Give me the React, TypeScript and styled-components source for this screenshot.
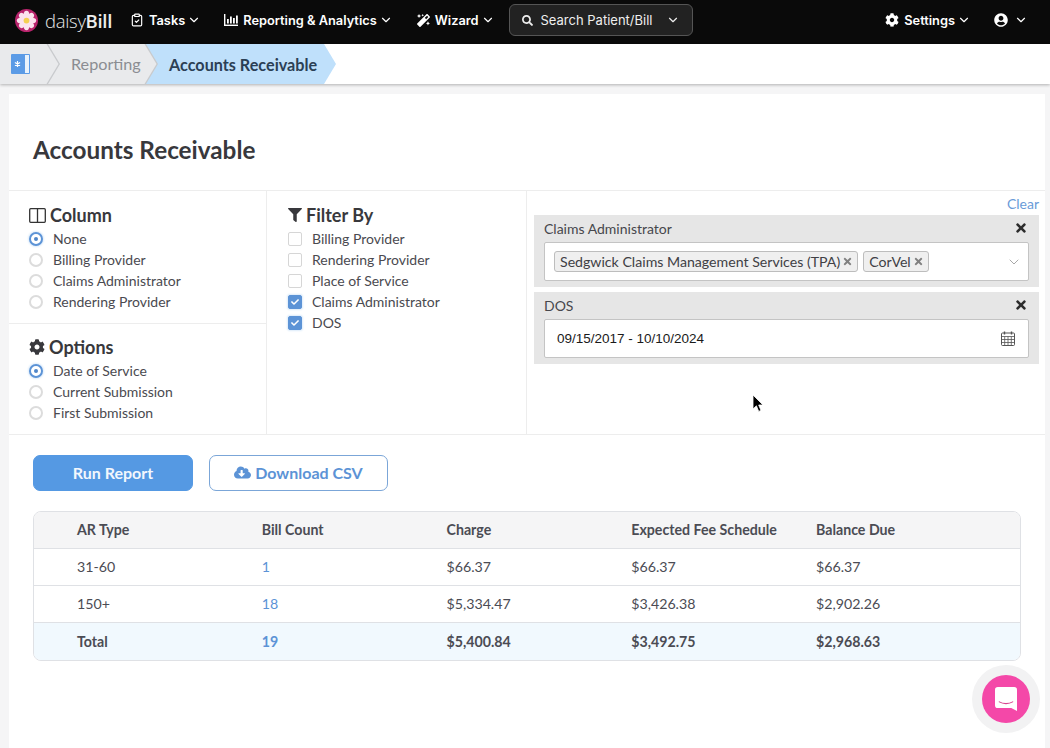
import styled, { createGlobalStyle } from 'styled-components';
import {
  FaCog,
  FaFilter,
  FaUserCircle,
  FaSearch,
  FaMagic,
  FaCloudDownloadAlt,
  FaTimes,
  FaCheck,
} from 'react-icons/fa';
import { ChevronDown, ClipboardCheck } from 'lucide-react';

const GlobalStyle = createGlobalStyle`
  html, body {
    margin: 0;
    padding: 0;
    height: 100%;
    background: #f5f5f6;
  }
  * {
    box-sizing: border-box;
  }
`;

const Page = styled.div`
  position: relative;
  height: 748px;
  display: flex;
  flex-direction: column;
  overflow: hidden;
  font-family: Lato, 'Open Sans', sans-serif;
  color: #3d3d42;
`;

const TopBar = styled.header`
  height: 44px;
  flex: none;
  background: #0a0a0a;
  display: flex;
  align-items: center;
  padding: 0 22px 4px 15px;
  color: #fff;
  font-family: Inter, sans-serif;
`;

const Brand = styled.div`
  display: flex;
  align-items: center;
  gap: 7px;
  margin-right: 17px;
`;

const BrandName = styled.span`
  width: 68px;
  font-family: 'Open Sans', sans-serif;
  font-size: 18.5px;
  font-weight: 300;
  letter-spacing: -0.3px;
  color: #e8e8e8;

  b {
    font-weight: 600;
    color: #eee;
  }
`;

const NavItem = styled.div<{ $gap?: number }>`
  display: flex;
  align-items: center;
  gap: 5px;
  margin-right: ${(p) => p.$gap ?? 0}px;
  font-size: 12.8px;
  font-weight: 600;
  white-space: nowrap;
`;

const NavCaret = styled(ChevronDown).attrs({ size: 14 })`
  margin-left: -3px;
`;

const UserCaret = styled(ChevronDown).attrs({ size: 14 })`
  margin-left: 1px;
`;

const Search = styled.div`
  width: 184px;
  height: 32px;
  margin-right: auto;
  padding: 0 12px;
  display: flex;
  align-items: center;
  gap: 8px;
  background: #222;
  border: 1px solid #555;
  border-radius: 6px;
  font-size: 13px;
  color: #eee;

  span {
    flex: 1;
  }
`;

const CrumbBar = styled.nav`
  height: 40px;
  flex: none;
  background: #fff;
  display: flex;
  box-shadow: 0 1px 3px rgba(0, 0, 0, 0.28);
  position: relative;
  font-size: 16.2px;
`;

const arrow = 'polygon(0 0, calc(100% - 12px) 0, 100% 50%, calc(100% - 12px) 100%, 0 100%)';

const CrumbHome = styled.div`
  position: relative;
  z-index: 2;
  width: 60px;
  background: #c8cacd;
  clip-path: ${arrow};
  display: flex;
  align-items: center;
  padding-left: 11px;

  &::before {
    content: '';
    position: absolute;
    inset: 0 1.5px 0 -1.5px;
    background: #e9eaec;
    clip-path: ${arrow};
  }
  svg {
    position: relative;
  }
`;

const CrumbLink = styled.div`
  position: relative;
  z-index: 1;
  width: 110px;
  margin-left: -12px;
  padding: 0 0 1px 23px;
  background: #c8cacd;
  clip-path: ${arrow};
  display: flex;
  align-items: center;
  color: #8b8d92;

  &::before {
    content: '';
    position: absolute;
    inset: 0 1.5px 0 -1.5px;
    background: #e9eaec;
    clip-path: ${arrow};
  }
  span {
    position: relative;
  }
`;

const CrumbActive = styled.div`
  width: 190px;
  margin-left: -12px;
  padding-left: 23px;
  background: #bfe0fb;
  clip-path: ${arrow};
  display: flex;
  align-items: center;
  font-weight: 700;
  color: #2b3f55;
`;

const Panel = styled.main`
  flex: 1;
  margin: 10px 5px 0 9px;
  background: #fff;
`;

const TitleRow = styled.div`
  height: 96px;
  display: flex;
  align-items: center;
  padding: 15px 0 0 24px;
`;

const Title = styled.h1`
  margin: 0;
  font-size: 24.3px;
  font-weight: 700;
  color: #38383c;
`;

const FilterGrid = styled.section`
  height: 245px;
  display: grid;
  grid-template-columns: 258px 260px 1fr;
  border-top: 1px solid #ededed;
  border-bottom: 1px solid #ededed;
`;

const Column = styled.div`
  border-right: 1px solid #ededed;
  display: flex;
  flex-direction: column;

  &:last-child {
    border-right: 0;
  }
`;

const Group = styled.div`
  padding: 13px 20px 11px;
`;

const ColumnGroup = styled(Group)`
  border-bottom: 1px solid #ededed;
`;

const OptionsGroup = styled(Group)`
  padding-top: 12px;
`;

const FilterGroup = styled(Group)`
  padding-left: 21px;
`;

const GroupHeading = styled.h2`
  margin: 0 0 2px;
  height: 22px;
  display: flex;
  align-items: center;
  gap: 4px;
  font-size: 18px;
  font-weight: 700;
  color: #38383c;
`;

const OptionRow = styled.div`
  height: 21px;
  display: flex;
  align-items: center;
  gap: 10px;
  font-size: 14px;
  color: #4a4a50;
`;

const Radio = styled.span<{ $on?: boolean }>`
  width: 14px;
  height: 14px;
  flex: none;
  border-radius: 50%;
  border: ${(p) => (p.$on ? '2px solid #5c93d6' : '2px solid #dcdcdc')};
  display: flex;
  align-items: center;
  justify-content: center;
  background: #fff;
  box-shadow: ${(p) => (p.$on ? '0 0 2px 1px #dcebfa' : 'none')};

  &::after {
    content: '';
    width: 4px;
    height: 4px;
    border-radius: 50%;
    background: ${(p) => (p.$on ? '#4f86c9' : 'transparent')};
  }
`;

const Check = styled.span<{ $on?: boolean }>`
  width: 14px;
  height: 14px;
  flex: none;
  border-radius: 2px;
  border: 1.5px solid ${(p) => (p.$on ? '#5c93d6' : '#d6d6d6')};
  background: ${(p) => (p.$on ? '#5c93d6' : '#fff')};
  display: flex;
  align-items: center;
  justify-content: center;
  color: #fff;
  font-size: 8px;
  box-shadow: ${(p) => (p.$on ? '0 0 2px 1px #dcebfa' : 'none')};
`;

const ClearRow = styled.div`
  height: 24px;
  padding: 4px 6px 0 0;
  text-align: right;
  font-size: 14px;
  color: #6a9bd8;
`;

const FilterStack = styled.div`
  display: flex;
  flex-direction: column;
  gap: 5px;
  padding: 0 6px 0 7px;
`;

const FilterCard = styled.div`
  height: 72px;
  padding: 0 10px;
  background: #e6e6e6;
`;

const FilterHead = styled.div`
  height: 27px;
  padding-bottom: 1px;
  display: flex;
  align-items: center;
  justify-content: space-between;
  font-size: 14px;
  color: #47474c;

  svg {
    color: #2c2c2c;
    font-size: 14px;
    margin-right: 1.5px;
  }
`;

const FieldBox = styled.div`
  height: 39px;
  display: flex;
  align-items: center;
  gap: 5px;
  padding: 0 13px 0 9px;
  background: #fff;
  border: 1px solid #c4c4c4;
  border-radius: 2px;
`;

const Tag = styled.span`
  height: 21px;
  display: flex;
  align-items: center;
  gap: 2px;
  padding: 0 4px 0 5px;
  background: #efefef;
  border: 1px solid #bdbdbd;
  border-radius: 3px;
  font-size: 14.15px;
  color: #404045;
  white-space: nowrap;

  svg {
    color: #808080;
    font-size: 11px;
  }
`;

const SelectCaret = styled(ChevronDown).attrs({ size: 16, color: '#a8a8a8', strokeWidth: 1.5 })`
  margin: 0 -7px 0 auto;
`;

const DateValue = styled.span`
  flex: 1;
  padding-left: 3px;
  font-family: 'Liberation Sans', Arial, sans-serif;
  font-size: 13.5px;
  color: #1a1a1a;
`;

const Actions = styled.div`
  display: flex;
  gap: 16px;
  padding: 20px 0 20px 24px;
`;

const Button = styled.button<{ $ghost?: boolean }>`
  height: 36px;
  width: ${(p) => (p.$ghost ? '179px' : '160px')};
  padding: 0 0 2px;
  display: flex;
  align-items: center;
  justify-content: center;
  gap: 4px;
  border-radius: 7px;
  border: 1px solid ${(p) => (p.$ghost ? '#7ba6d8' : '#5599e3')};
  background: ${(p) => (p.$ghost ? '#fff' : '#5599e3')};
  color: ${(p) => (p.$ghost ? '#5c93d6' : '#f2f7fd')};
  font-family: inherit;
  font-size: 16px;
  font-weight: 700;
`;

const Table = styled.div`
  width: 988px;
  margin-left: 24px;
  border: 1px solid #dfe1e5;
  border-radius: 8px;
  overflow: hidden;
`;

const Row = styled.div<{ $kind?: 'head' | 'total' }>`
  height: 37px;
  display: grid;
  grid-template-columns: repeat(5, 184.75px);
  align-items: center;
  padding: 0 0 1px 43px;
  font-size: 14.2px;
  color: #4b4c54;
  font-weight: ${(p) => (p.$kind ? 700 : 400)};
  background: ${(p) =>
    p.$kind === 'head' ? '#f5f5f6' : p.$kind === 'total' ? '#f1f9fe' : '#fff'};
  border-bottom: 1px solid #dfe1e5;

  &:last-child {
    border-bottom: 0;
  }
`;

const CountLink = styled.span`
  color: #5c93d6;
`;

const ChatHalo = styled.div`
  position: absolute;
  right: 10px;
  bottom: 15px;
  width: 68px;
  height: 68px;
  border-radius: 50%;
  background: #f2f2f3;
  display: flex;
  align-items: center;
  justify-content: center;
`;

const ChatButton = styled.div`
  width: 48px;
  height: 48px;
  border-radius: 50%;
  background: #f448a8;
  display: flex;
  align-items: center;
  justify-content: center;
`;

const Pointer = styled.svg`
  position: absolute;
  left: 752px;
  top: 394px;
`;

const Logo = () => (
  <svg width="23" height="23" viewBox="0 0 24 24">
    <circle cx="12" cy="12" r="12" fill="#b8246c" />
    {[0, 45, 90, 135, 180, 225, 270, 315].map((a) => (
      <ellipse key={a} cx="12" cy="6.5" rx="3" ry="4.6" fill="#fbe3ee" transform={`rotate(${a} 12 12)`} />
    ))}
    <circle cx="12" cy="12" r="3" fill="#f4cf52" />
  </svg>
);

const BarsIcon = () => (
  <svg width="14" height="12" viewBox="0 0 14 12" fill="#fff">
    <rect x="0" y="0" width="1.4" height="12" />
    <rect x="0" y="10.6" width="14" height="1.4" />
    <rect x="3" y="5" width="1.8" height="4.5" />
    <rect x="6" y="2.5" width="1.8" height="7" />
    <rect x="9" y="4" width="1.8" height="5.5" />
    <rect x="12" y="1.5" width="1.8" height="8" />
  </svg>
);

const ChartCrumbIcon = () => (
  <svg width="20" height="20" viewBox="0 0 20 20">
    <rect x="0" y="0" width="19" height="20" rx="1" fill="#5b9be6" />
    <rect x="14" y="1" width="4" height="18" fill="#e8f2fc" />
    <path d="M6.5 7v6M3.9 8.5l5.2 3M9.1 8.5l-5.2 3" stroke="#fff" strokeWidth="1.2" />
  </svg>
);

const ColumnsIcon = () => (
  <svg width="17" height="15" viewBox="0 0 17 15" fill="none" stroke="#333" strokeWidth="1.3">
    <rect x="0.7" y="0.7" width="15.6" height="13.6" rx="1" />
    <path d="M8.5 0.7v13.6" />
  </svg>
);

const CalendarIcon = () => (
  <svg width="14" height="15" viewBox="0 0 14 15" fill="none" stroke="#555" strokeWidth="1">
    <rect x="0.5" y="2" width="13" height="12.5" rx="1" />
    <path d="M0.5 5.5h13M0.5 8.5h13M0.5 11.5h13M3.7 5.5v9M7 5.5v9M10.3 5.5v9" strokeWidth="0.8" />
    <path d="M3.5 0.5v3M10.5 0.5v3" strokeWidth="1.4" />
  </svg>
);

const ChatIcon = () => (
  <svg width="22" height="24" viewBox="0 0 23 25">
    <path d="M3 0h17a3 3 0 0 1 3 3v22l-6-3H3a3 3 0 0 1-3-3V3a3 3 0 0 1 3-3z" fill="#fff" />
    <path d="M4.5 15.5c4 2.4 10 2.4 14 0" fill="none" stroke="#d8438f" strokeWidth="1.2" strokeLinecap="round" />
  </svg>
);

const columnOptions = ['None', 'Billing Provider', 'Claims Administrator', 'Rendering Provider'];
const reportOptions = ['Date of Service', 'Current Submission', 'First Submission'];
const filterOptions = [
  { label: 'Billing Provider', on: false },
  { label: 'Rendering Provider', on: false },
  { label: 'Place of Service', on: false },
  { label: 'Claims Administrator', on: true },
  { label: 'DOS', on: true },
];

const rows = [
  { type: '31-60', count: '1', charge: '$66.37', fee: '$66.37', balance: '$66.37' },
  { type: '150+', count: '18', charge: '$5,334.47', fee: '$3,426.38', balance: '$2,902.26' },
];

export default function App() {
  return (
    <Page>
      <GlobalStyle />
      <TopBar>
        <Brand>
          <Logo />
          <BrandName>
            daisy<b>Bill</b>
          </BrandName>
        </Brand>
        <NavItem $gap={23}>
          <ClipboardCheck size={14} />
          Tasks
          <NavCaret />
        </NavItem>
        <NavItem $gap={24}>
          <BarsIcon />
          Reporting &amp; Analytics
          <NavCaret />
        </NavItem>
        <NavItem $gap={14}>
          <FaMagic size={13} />
          Wizard
          <NavCaret />
        </NavItem>
        <Search>
          <FaSearch size={11} />
          <span>Search Patient/Bill</span>
          <ChevronDown size={14} />
        </Search>
        <NavItem $gap={23}>
          <FaCog size={14} />
          Settings
          <NavCaret />
        </NavItem>
        <NavItem>
          <FaUserCircle size={14} />
          <UserCaret />
        </NavItem>
      </TopBar>

      <CrumbBar>
        <CrumbHome>
          <ChartCrumbIcon />
        </CrumbHome>
        <CrumbLink>
          <span>Reporting</span>
        </CrumbLink>
        <CrumbActive>Accounts Receivable</CrumbActive>
      </CrumbBar>

      <Panel>
        <TitleRow>
          <Title>Accounts Receivable</Title>
        </TitleRow>

        <FilterGrid>
          <Column>
            <ColumnGroup>
              <GroupHeading>
                <ColumnsIcon />
                Column
              </GroupHeading>
              {columnOptions.map((o, i) => (
                <OptionRow key={o}>
                  <Radio $on={i === 0} />
                  {o}
                </OptionRow>
              ))}
            </ColumnGroup>
            <OptionsGroup>
              <GroupHeading>
                <FaCog size={16} />
                Options
              </GroupHeading>
              {reportOptions.map((o, i) => (
                <OptionRow key={o}>
                  <Radio $on={i === 0} />
                  {o}
                </OptionRow>
              ))}
            </OptionsGroup>
          </Column>

          <Column>
            <FilterGroup>
              <GroupHeading>
                <FaFilter size={14} />
                Filter By
              </GroupHeading>
              {filterOptions.map((o) => (
                <OptionRow key={o.label}>
                  <Check $on={o.on}>{o.on && <FaCheck />}</Check>
                  {o.label}
                </OptionRow>
              ))}
            </FilterGroup>
          </Column>

          <Column>
            <ClearRow>Clear</ClearRow>
            <FilterStack>
              <FilterCard>
                <FilterHead>
                  Claims Administrator
                  <FaTimes />
                </FilterHead>
                <FieldBox>
                  <Tag>
                    Sedgwick Claims Management Services (TPA)
                    <FaTimes />
                  </Tag>
                  <Tag>
                    CorVel
                    <FaTimes />
                  </Tag>
                  <SelectCaret />
                </FieldBox>
              </FilterCard>
              <FilterCard>
                <FilterHead>
                  DOS
                  <FaTimes />
                </FilterHead>
                <FieldBox>
                  <DateValue>09/15/2017 - 10/10/2024</DateValue>
                  <CalendarIcon />
                </FieldBox>
              </FilterCard>
            </FilterStack>
          </Column>
        </FilterGrid>

        <Actions>
          <Button>Run Report</Button>
          <Button $ghost>
            <FaCloudDownloadAlt size={17} />
            Download CSV
          </Button>
        </Actions>

        <Table>
          <Row $kind="head">
            <span>AR Type</span>
            <span>Bill Count</span>
            <span>Charge</span>
            <span>Expected Fee Schedule</span>
            <span>Balance Due</span>
          </Row>
          {rows.map((r) => (
            <Row key={r.type}>
              <span>{r.type}</span>
              <CountLink>{r.count}</CountLink>
              <span>{r.charge}</span>
              <span>{r.fee}</span>
              <span>{r.balance}</span>
            </Row>
          ))}
          <Row $kind="total">
            <span>Total</span>
            <CountLink>19</CountLink>
            <span>$5,400.84</span>
            <span>$3,492.75</span>
            <span>$2,968.63</span>
          </Row>
        </Table>
      </Panel>

      <Pointer width="12" height="19" viewBox="0 0 12 19">
        <path d="M1 1v14l3.4-3.2 2.3 5.6 2.3-1-2.3-5.4H11z" fill="#000" stroke="#fff" strokeWidth="0.8" />
      </Pointer>

      <ChatHalo>
        <ChatButton>
          <ChatIcon />
        </ChatButton>
      </ChatHalo>
    </Page>
  );
}
